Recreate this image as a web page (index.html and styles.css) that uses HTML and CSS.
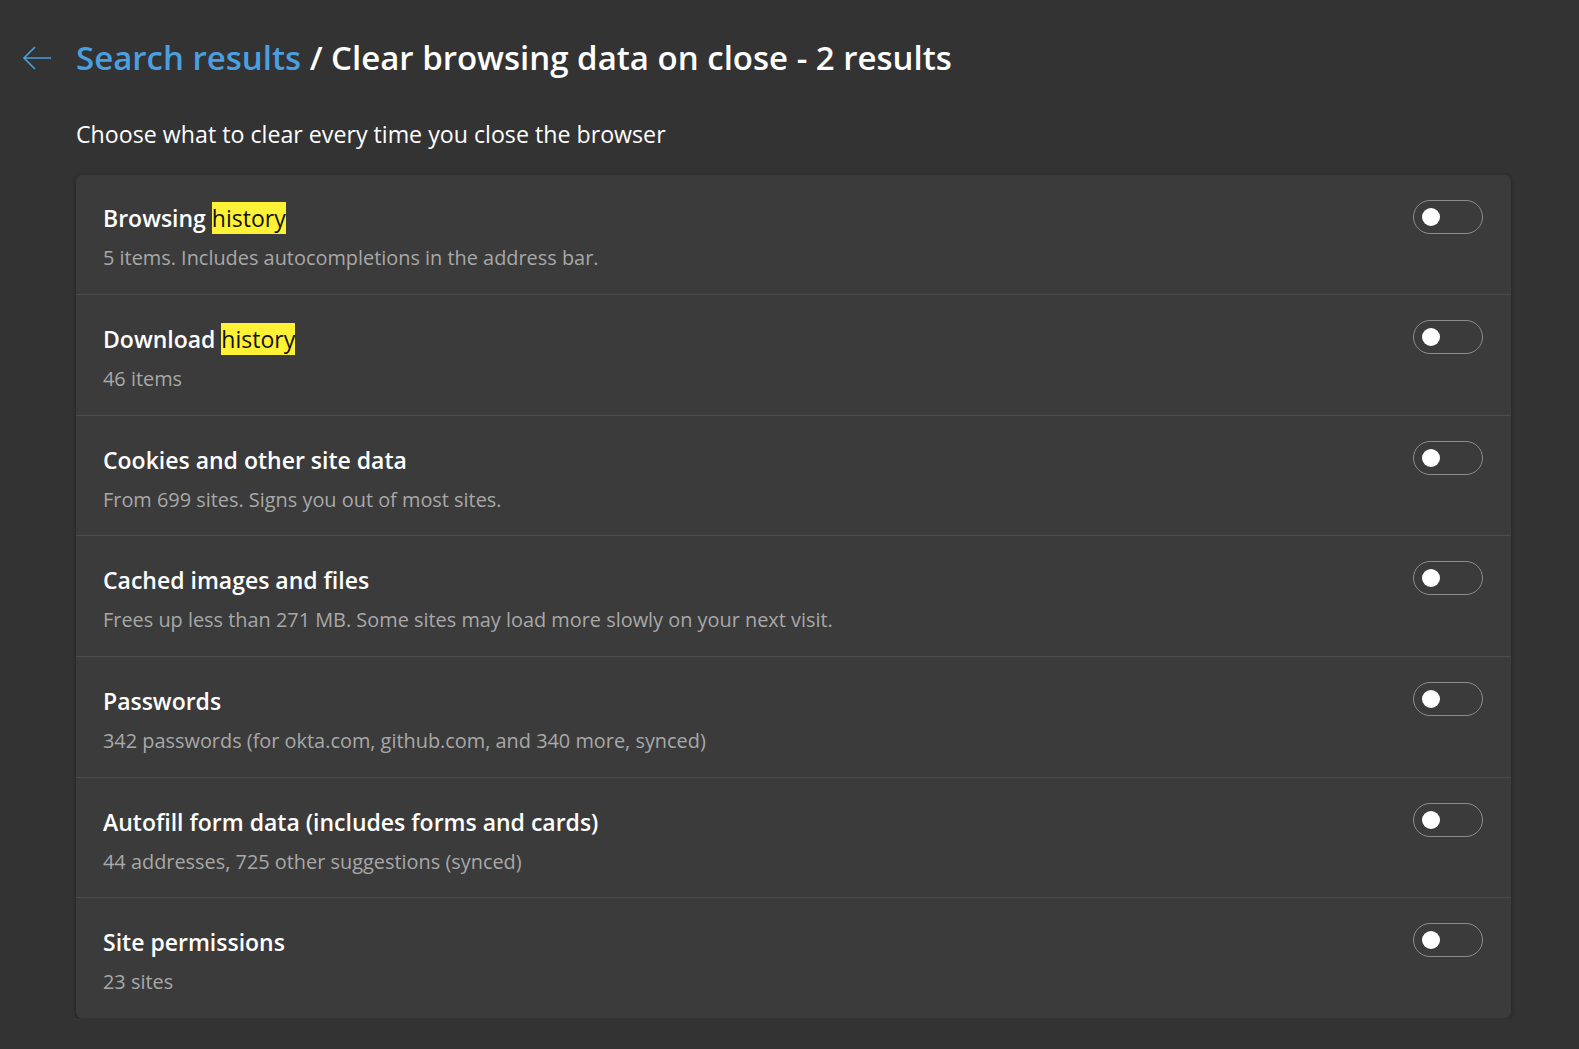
FILE: index.html
```html
<!DOCTYPE html>
<html>
<head>
<meta charset="utf-8">
<link rel="stylesheet" href="styles.css">
</head>
<body>
<div class="page">
  <div class="header">
    <svg class="back" width="30" height="26" viewBox="0 0 30 26"><path d="M29 13H2M13 2L2 13l11 11" fill="none" stroke="#4a9fe0" stroke-width="1.6"/></svg>
    <h1 class="title"><span class="crumb">Search results</span> / Clear browsing data on close - 2 results</h1>
  </div>
  <div class="content">
    <p class="intro">Choose what to clear every time you close the browser</p>
    <div class="card">
      <div class="row"><div class="text"><div class="name">Browsing <mark>history</mark></div><div class="desc">5 items. Includes autocompletions in the address bar.</div></div><div class="toggle"><span class="knob"></span></div></div>
      <div class="row"><div class="text"><div class="name">Download <mark>history</mark></div><div class="desc">46 items</div></div><div class="toggle"><span class="knob"></span></div></div>
      <div class="row"><div class="text"><div class="name">Cookies and other site data</div><div class="desc">From 699 sites. Signs you out of most sites.</div></div><div class="toggle"><span class="knob"></span></div></div>
      <div class="row"><div class="text"><div class="name">Cached images and files</div><div class="desc">Frees up less than 271 MB. Some sites may load more slowly on your next visit.</div></div><div class="toggle"><span class="knob"></span></div></div>
      <div class="row"><div class="text"><div class="name">Passwords</div><div class="desc">342 passwords (for okta.com, github.com, and 340 more, synced)</div></div><div class="toggle"><span class="knob"></span></div></div>
      <div class="row"><div class="text"><div class="name">Autofill form data (includes forms and cards)</div><div class="desc">44 addresses, 725 other suggestions (synced)</div></div><div class="toggle"><span class="knob"></span></div></div>
      <div class="row"><div class="text"><div class="name">Site permissions</div><div class="desc">23 sites</div></div><div class="toggle"><span class="knob"></span></div></div>
    </div>
  </div>
</div>
</body>
</html>
```
FILE: styles.css
```css
html, body {
  margin: 0;
  padding: 0;
  background: #333333;
}
body {
  font-family: "Open Sans", "Noto Sans", sans-serif;
  color: #ffffff;
}
.page {
  padding-top: 38px;
}
.header {
  display: flex;
  align-items: center;
  padding-left: 22px;
  gap: 24px;
  height: 40px;
}
.back {
  display: block;
  flex: none;
}
.title {
  margin: 0;
  font-size: 33px;
  font-weight: 600;
  line-height: 40px;
  color: #ffffff;
}
.crumb {
  color: #4a9fe0;
}
.content {
  margin-left: 76px;
  width: 1435px;
}
.intro {
  margin: 41px 0 26px;
  font-size: 23.2px;
  line-height: 30px;
}
.card {
  background: #3b3b3b;
  border-radius: 6px;
  box-shadow: 0 1px 4px rgba(0,0,0,0.35);
}
.row {
  display: flex;
  justify-content: space-between;
  align-items: flex-start;
  height: 119px;
  box-sizing: border-box;
  padding: 27px 28px 0 27px;
}
.row + .row {
  border-top: 1px solid #4b4b4b;
  height: 120.7px;
  padding-top: 28px;
}
.row + .row .toggle {
  margin-top: -3px;
}
.name {
  font-size: 23px;
  font-weight: 600;
  line-height: 32px;
}
mark {
  background: #fff135;
  color: #111;
  font-weight: 400;
}
.desc {
  margin-top: 10px;
  font-size: 19.9px;
  line-height: 28px;
  color: #a8a8a8;
}
.toggle {
  flex: none;
  width: 70px;
  height: 34px;
  box-sizing: border-box;
  border: 1px solid #8c8c8c;
  border-radius: 17px;
  display: flex;
  align-items: center;
  padding-left: 8px;
  margin-top: -2px;
}
.knob {
  width: 18px;
  height: 18px;
  border-radius: 50%;
  background: #ffffff;
}
```
